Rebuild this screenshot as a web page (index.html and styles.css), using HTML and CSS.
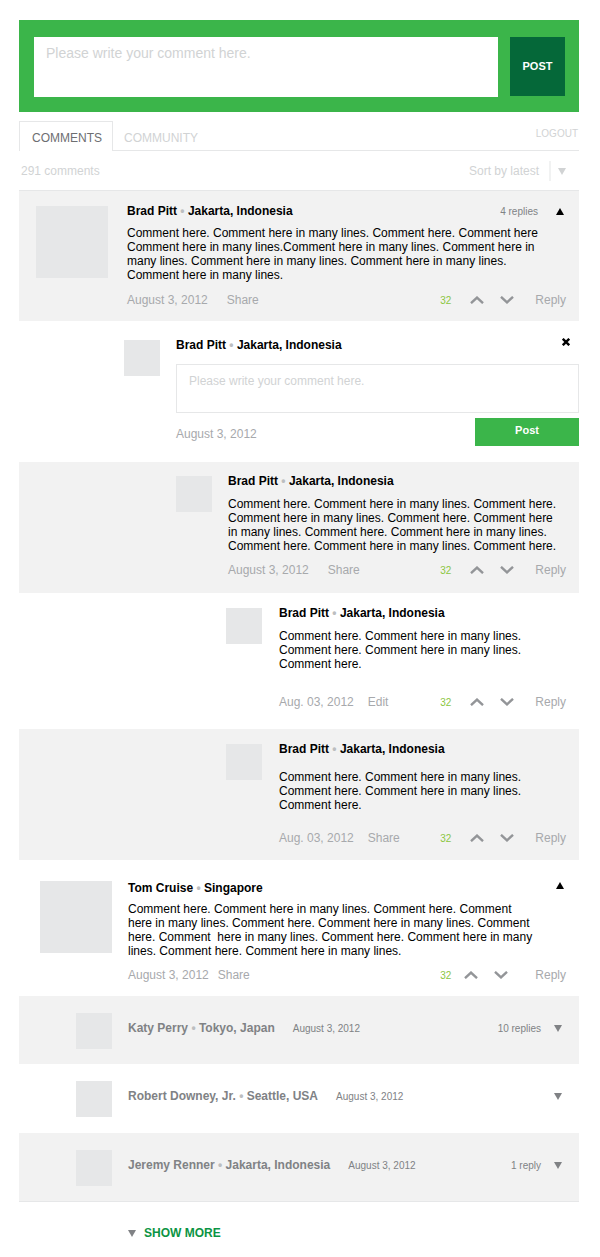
FILE: index.html
```html
<!DOCTYPE html>
<html lang="en">
<head>
<meta charset="utf-8">
<meta name="viewport" content="width=device-width, initial-scale=1">
<title>Comments</title>
<link rel="stylesheet" href="styles.css">
</head>
<body>
<svg class="sprite" aria-hidden="true">
  <symbol id="up" viewBox="0 0 14 8"><path d="M1 7.2 7 1.6l6 5.6" fill="none" stroke="currentColor" stroke-width="2.4"/></symbol>
  <symbol id="down" viewBox="0 0 14 8"><path d="M1 .8l6 5.6L13 .8" fill="none" stroke="currentColor" stroke-width="2.4"/></symbol>
  <symbol id="tri-up" viewBox="0 0 8 7"><path d="M4 0l4 7H0z" fill="currentColor"/></symbol>
  <symbol id="tri-down" viewBox="0 0 8 7"><path d="M0 0h8L4 7z" fill="currentColor"/></symbol>
  <symbol id="close" viewBox="0 0 8 8"><path d="M.8.8l6.4 6.4M7.2.8L.8 7.2" fill="none" stroke="currentColor" stroke-width="2.4"/></symbol>
</svg>
<main class="page">
  <form class="composer">
    <textarea class="composer-input" aria-label="Comment" placeholder="Please write your comment here."></textarea>
    <button class="composer-post" type="button">POST</button>
  </form>

  <nav class="tabs">
    <button class="tab tab-active" type="button">COMMENTS</button>
    <button class="tab" type="button">COMMUNITY</button>
    <a class="logout" href="#">LOGOUT</a>
  </nav>

  <div class="toolbar">
    <span>291 comments</span>
    <div class="sort">
      <select class="sort-select" aria-label="Sort order"><option>Sort by latest</option></select>
      <svg class="triangle sort-arrow" aria-hidden="true"><use href="#tri-down"/></svg>
    </div>
  </div>

  <section class="thread">
    <article class="comment comment-first shaded">
      <div class="avatar avatar-large"></div>
      <div class="content">
        <header class="head">
          <h2 class="name">Brad Pitt <span class="dot">•</span> Jakarta, Indonesia</h2>
          <span class="count">4 replies</span>
          <button class="icon-button" type="button" aria-label="Collapse"><svg class="triangle"><use href="#tri-up"/></svg></button>
        </header>
        <p class="text">Comment here. Comment here in many lines. Comment here. Comment here Comment here in many lines.Comment here in many lines. Comment here in many lines. Comment here in many lines. Comment here in many lines. Comment here in many lines.</p>
        <footer class="foot">
          <span>August 3, 2012</span>
          <a href="#">Share</a>
          <span class="score">32</span>
          <button class="icon-button" type="button" aria-label="Vote up"><svg class="chevron"><use href="#up"/></svg></button>
          <button class="icon-button" type="button" aria-label="Vote down"><svg class="chevron"><use href="#down"/></svg></button>
          <a class="reply" href="#">Reply</a>
        </footer>
      </div>
    </article>

    <article class="comment comment-editor">
      <div class="avatar"></div>
      <form class="content">
        <div class="head">
          <h2 class="name">Brad Pitt <span class="dot">•</span> Jakarta, Indonesia</h2>
          <button class="icon-button close" type="button" aria-label="Close"><svg class="cross"><use href="#close"/></svg></button>
        </div>
        <textarea class="reply-input" aria-label="Reply" placeholder="Please write your comment here."></textarea>
        <div class="editor-foot">
          <span class="editor-date">August 3, 2012</span>
          <button class="reply-post" type="button">Post</button>
        </div>
      </form>
    </article>

    <article class="comment comment-second shaded">
      <div class="avatar"></div>
      <div class="content">
        <header class="head"><h2 class="name">Brad Pitt <span class="dot">•</span> Jakarta, Indonesia</h2></header>
        <p class="text">Comment here. Comment here in many lines. Comment here. Comment here in many lines. Comment here. Comment here in many lines. Comment here. Comment here in many lines. Comment here. Comment here in many lines. Comment here.</p>
        <footer class="foot">
          <span>August 3, 2012</span>
          <a href="#">Share</a>
          <span class="score">32</span>
          <button class="icon-button" type="button" aria-label="Vote up"><svg class="chevron"><use href="#up"/></svg></button>
          <button class="icon-button" type="button" aria-label="Vote down"><svg class="chevron"><use href="#down"/></svg></button>
          <a class="reply" href="#">Reply</a>
        </footer>
      </div>
    </article>

    <article class="comment comment-third">
      <div class="avatar"></div>
      <div class="content">
        <header class="head"><h2 class="name">Brad Pitt <span class="dot">•</span> Jakarta, Indonesia</h2></header>
        <p class="text">Comment here. Comment here in many lines. Comment here. Comment here in many lines. Comment here.</p>
        <footer class="foot">
          <span>Aug. 03, 2012</span>
          <a href="#">Edit</a>
          <span class="score">32</span>
          <button class="icon-button" type="button" aria-label="Vote up"><svg class="chevron"><use href="#up"/></svg></button>
          <button class="icon-button" type="button" aria-label="Vote down"><svg class="chevron"><use href="#down"/></svg></button>
          <a class="reply" href="#">Reply</a>
        </footer>
      </div>
    </article>

    <article class="comment comment-fourth shaded">
      <div class="avatar"></div>
      <div class="content">
        <header class="head"><h2 class="name">Brad Pitt <span class="dot">•</span> Jakarta, Indonesia</h2></header>
        <p class="text">Comment here. Comment here in many lines. Comment here. Comment here in many lines. Comment here.</p>
        <footer class="foot">
          <span>Aug. 03, 2012</span>
          <a href="#">Share</a>
          <span class="score">32</span>
          <button class="icon-button" type="button" aria-label="Vote up"><svg class="chevron"><use href="#up"/></svg></button>
          <button class="icon-button" type="button" aria-label="Vote down"><svg class="chevron"><use href="#down"/></svg></button>
          <a class="reply" href="#">Reply</a>
        </footer>
      </div>
    </article>

    <article class="comment comment-fifth">
      <div class="avatar avatar-large"></div>
      <div class="content">
        <header class="head">
          <h2 class="name">Tom Cruise <span class="dot">•</span> Singapore</h2>
          <button class="icon-button push" type="button" aria-label="Collapse"><svg class="triangle"><use href="#tri-up"/></svg></button>
        </header>
        <p class="text">Comment here. Comment here in many lines. Comment here. Comment here in many lines. Comment here. Comment here in many lines. Comment here. Comment&nbsp; here in many lines. Comment here. Comment here in many lines. Comment here. Comment here in many lines.</p>
        <footer class="foot">
          <span>August 3, 2012</span>
          <a href="#">Share</a>
          <span class="score">32</span>
          <button class="icon-button" type="button" aria-label="Vote up"><svg class="chevron"><use href="#up"/></svg></button>
          <button class="icon-button" type="button" aria-label="Vote down"><svg class="chevron"><use href="#down"/></svg></button>
          <a class="reply" href="#">Reply</a>
        </footer>
      </div>
    </article>

    <article class="row shaded">
      <div class="avatar"></div>
      <h2 class="name">Katy Perry <span class="dot">•</span> Tokyo, Japan</h2>
      <span class="small">August 3, 2012</span>
      <span class="small push">10 replies</span>
      <button class="icon-button" type="button" aria-label="Expand"><svg class="triangle"><use href="#tri-down"/></svg></button>
    </article>
    <article class="row">
      <div class="avatar"></div>
      <h2 class="name">Robert Downey, Jr. <span class="dot">•</span> Seattle, USA</h2>
      <span class="small">August 3, 2012</span>
      <button class="icon-button push" type="button" aria-label="Expand"><svg class="triangle"><use href="#tri-down"/></svg></button>
    </article>
    <article class="row shaded">
      <div class="avatar"></div>
      <h2 class="name">Jeremy Renner <span class="dot">•</span> Jakarta, Indonesia</h2>
      <span class="small">August 3, 2012</span>
      <span class="small push">1 reply</span>
      <button class="icon-button" type="button" aria-label="Expand"><svg class="triangle"><use href="#tri-down"/></svg></button>
    </article>
  </section>

  <button class="show-more" type="button"><svg class="triangle" aria-hidden="true"><use href="#tri-down"/></svg>SHOW MORE</button>
</main>
</body>
</html>
```
FILE: styles.css
```css
* {
  box-sizing: border-box;
}

body {
  margin: 0;
  background: #fff;
  color: #000;
  font: 12px/14px "Liberation Sans", Arial, sans-serif;
}

button,
textarea,
select {
  margin: 0;
  padding: 0;
  border: 0;
  border-radius: 0;
  background: none;
  color: inherit;
  font: inherit;
}

button {
  cursor: pointer;
}

a {
  color: inherit;
  text-decoration: none;
}

.sprite {
  display: none;
}

.page {
  padding: 20px 21px 16px 19px;
}

/* Main comment box */
.composer {
  display: flex;
  gap: 12px;
  padding: 17px 14px 15px 15px;
  background: #3bb54a;
}

.composer-input {
  flex: 1;
  min-width: 0;
  height: 60px;
  padding: 8px 12px;
  background: #fff;
  font-size: 14px;
  line-height: 16px;
  resize: none;
}

::placeholder {
  color: #d1d3d4;
  opacity: 1;
}

.composer-post {
  width: 55px;
  height: 59px;
  padding-bottom: 2px;
  background: #056839;
  color: #fff;
  font-size: 11px;
  font-weight: bold;
}

/* Tabs and toolbar */
.tabs {
  display: flex;
  align-items: flex-start;
  margin-top: 9px;
  box-shadow: inset 0 -1px #e6e7e8;
}

.tab {
  height: 30px;
  padding: 3px 11px 0;
  color: #d1d3d4;
}

.tab-active {
  padding: 2px 10px 0 12px;
  border: 1px solid #e6e7e8;
  border-bottom: 0;
  background: #fff;
  color: #6d6e71;
}

.logout {
  margin: 6px 1px 0 auto;
  color: #d1d3d4;
  font-size: 10px;
}

.toolbar {
  display: flex;
  justify-content: space-between;
  align-items: center;
  height: 39px;
  padding: 0 13px 0 2px;
  color: #d1d3d4;
}

.sort {
  position: relative;
}

.sort-select {
  appearance: none;
  display: block;
  height: 20px;
  padding-right: 26px;
  background: linear-gradient(#f1f2f2, #f1f2f2) right 15px top / 2px 100% no-repeat;
}

.sort-arrow {
  position: absolute;
  top: 7px;
  right: 0;
  color: #d1d3d4;
  pointer-events: none;
}

/* Thread */
.thread {
  border-top: 1px solid #e6e7e8;
  border-bottom: 1px solid #e6e7e8;
}

.shaded {
  background: #f2f2f2;
}

.comment {
  display: flex;
  align-items: flex-start;
  gap: 16px;
  padding: 12px 0 16px;
}

.avatar {
  flex: none;
  width: 36px;
  height: 36px;
  background: #e6e7e8;
}

.comment .avatar {
  margin-top: 2px;
}

.avatar-large {
  width: 72px;
  height: 72px;
}

.content {
  flex: 1;
  min-width: 0;
}

.head {
  display: flex;
  align-items: center;
  padding-right: 15px;
}

.name {
  margin: 0;
  font-size: 12px;
  font-weight: bold;
}

.dot {
  color: #bcbec0;
}

.count {
  margin-left: auto;
  margin-right: 18px;
  padding-top: 2px;
  line-height: 12px;
  color: #808285;
  font-size: 10px;
}

.push {
  margin-left: auto;
}

.text {
  margin: 9px 0 0;
  padding-right: 21px;
}

.foot {
  display: flex;
  align-items: center;
  gap: 16px;
  margin-top: 10px;
  padding-right: 13px;
  color: #a7a9ac;
}

.foot a {
  margin-left: 3px;
}

.foot .score {
  margin: 0 3px 0 auto;
  padding-top: 2px;
  line-height: 12px;
  color: #8cc63f;
  font-size: 10px;
}

.foot .reply {
  margin-left: 5px;
}

.icon-button {
  display: flex;
}

.chevron {
  width: 14px;
  height: 8px;
  color: #939598;
}

.triangle {
  width: 8px;
  height: 7px;
}

.cross {
  width: 8px;
  height: 8px;
}

.comment-first {
  gap: 19px;
  padding: 13px 0 14px 17px;
}

.comment-first .text {
  margin-top: 8px;
  padding-right: 38px;
}

.comment-first .foot {
  margin-top: 11px;
}

.comment-editor {
  padding: 17px 0 16px 105px;
}

.close {
  margin: 0 -6px 0 auto;
  padding-bottom: 6px;
}

.reply-input {
  display: block;
  width: 100%;
  height: 49px;
  margin-top: 12px;
  padding: 9px 12px;
  border: 1px solid #e6e7e8;
  resize: none;
}

.editor-foot {
  display: flex;
  align-items: center;
  justify-content: space-between;
  margin-top: 5px;
  color: #a7a9ac;
}

.editor-date {
  padding-top: 4px;
}

.reply-post {
  width: 104px;
  height: 28px;
  padding-bottom: 4px;
  background: #3bb54a;
  color: #fff;
  font-size: 11px;
  font-weight: bold;
}

.comment-second {
  padding-left: 157px;
}

.comment-third,
.comment-fourth {
  gap: 17px;
  padding: 13px 0 20px 207px;
}

.comment-third .foot {
  margin-top: 24px;
}

.comment-third .foot a:first-of-type,
.comment-fourth .foot a:first-of-type {
  margin-left: -2px;
}

.comment-fourth {
  padding-bottom: 15px;
}

.comment-fourth .text {
  margin-top: 14px;
}

.comment-fourth .foot {
  margin-top: 19px;
}

.comment-fifth {
  padding: 21px 0 14px 21px;
}

.comment-fifth .avatar {
  margin-top: 0;
}

.comment-fifth .text {
  margin-top: 7px;
  padding-right: 44px;
}

.comment-fifth .head .icon-button {
  padding-bottom: 6px;
}

.comment-fifth .foot a:first-of-type {
  margin-left: -7px;
}

.comment-fifth .foot .score {
  margin-right: -3px;
}

.comment-fifth .foot .reply {
  margin-left: 11px;
}

/* Collapsed comments */
.row {
  display: flex;
  gap: 18px;
  padding: 17px 17px 15px 57px;
  color: #808285;
  line-height: 30px;
}

.row:not(.shaded) {
  padding-bottom: 16px;
}

.row .avatar {
  margin-right: -2px;
}

.row .small {
  padding-top: 1px;
  font-size: 10px;
}

.row .small + .small {
  margin-right: -5px;
}

.row .icon-button {
  align-items: center;
  height: 30px;
}

.show-more {
  display: flex;
  align-items: center;
  gap: 8px;
  margin: 24px 0 0 109px;
  color: #0b9444;
  font-weight: bold;
}

.show-more .triangle {
  color: #808285;
}
```
